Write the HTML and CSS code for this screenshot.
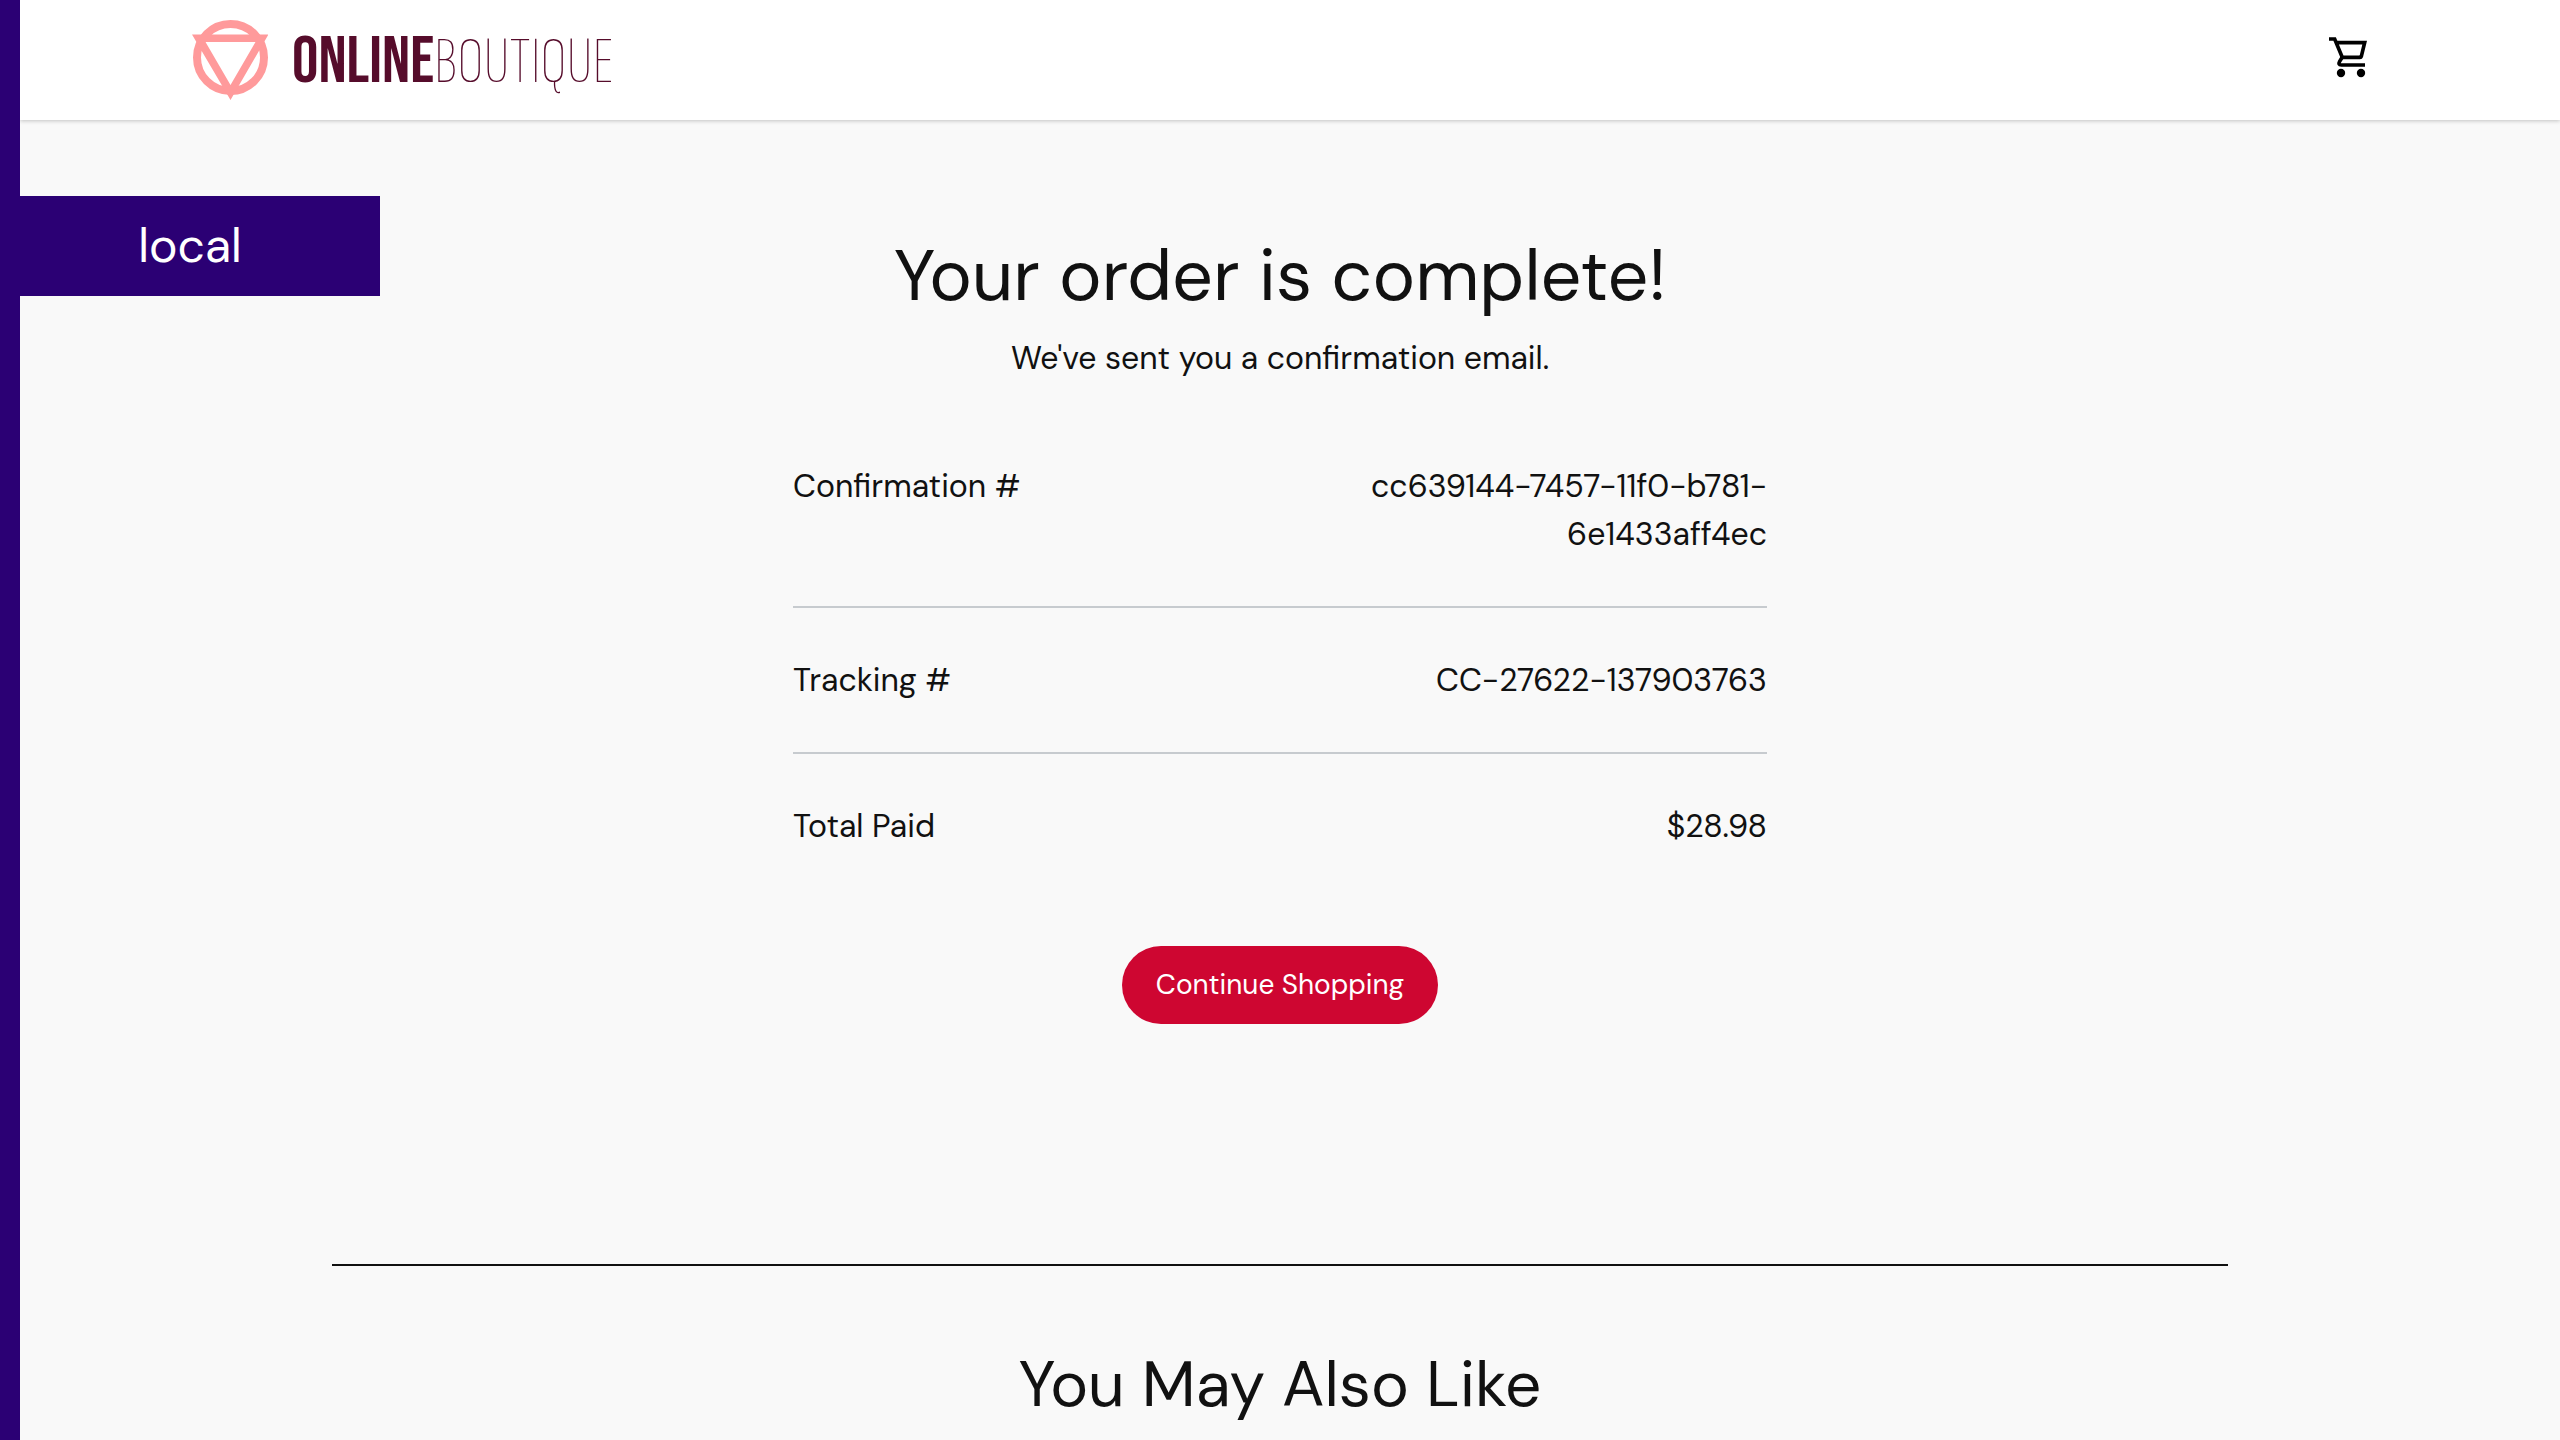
FILE: index.html
```html
<!DOCTYPE html>
<html lang="en">
<head>
  <meta charset="utf-8">
  <meta name="viewport" content="width=device-width, initial-scale=1">
  <title>Online Boutique</title>
  <link rel="stylesheet" href="styles.css">
</head>
<body>
  <div class="platform-flag">local</div>

  <header class="navbar">
    <a class="brand" href="#">
      <svg class="brand-mark" viewBox="0 0 76 82" aria-hidden="true">
        <circle cx="38.5" cy="38.5" r="33.5" fill="none" stroke="#ff9a9b" stroke-width="8"/>
        <path fill="#ff9a9b" fill-rule="evenodd" d="M0 15.500H76.500L38.500 81ZM13.500 23L38.500 66L63.500 23Z"/>
      </svg>
      <span class="brand-name"><span class="brand-bold">ONLINE</span><span class="brand-thin">BOUTIQUE</span></span>
    </a>
    <a class="cart-link" href="#" aria-label="Cart">
      <svg class="cart-icon" viewBox="0 0 120 126" aria-hidden="true">
        <g fill="none" stroke="#000" stroke-width="11">
          <path d="M3 9H20L43 64H96Q99 64 100 61L110 20H24"/>
          <path d="M43 63L35 76Q29 87 40 87H111"/>
        </g>
        <circle cx="39" cy="111" r="12.500"/>
        <circle cx="99" cy="111" r="12.500"/>
      </svg>
    </a>
  </header>

  <main>
    <section class="order">
      <h1>Your order is complete!</h1>
      <p class="order-note">We've sent you a confirmation email.</p>
      <dl class="order-details">
        <div class="order-row"><dt>Confirmation #</dt><dd>cc639144-7457-11f0-b781-6e1433aff4ec</dd></div>
        <div class="order-row"><dt>Tracking #</dt><dd>CC-27622-137903763</dd></div>
        <div class="order-row"><dt>Total Paid</dt><dd>$28.98</dd></div>
      </dl>
      <a class="button" href="#" role="button">Continue Shopping</a>
    </section>

    <section class="recommendations">
      <h2>You May Also Like</h2>
    </section>
  </main>
</body>
</html>
```
FILE: styles.css
```css
* {
  box-sizing: border-box;
}

body {
  margin: 0;
  min-height: 100vh;
  border-left: 20px solid #2b0074;
  background: #f9f9f9;
  color: #111;
  font-family: "DM Sans", Inter, sans-serif;
  font-size: 32px;
  line-height: 48px;
}

h1,
h2,
p,
dl,
dd {
  margin: 0;
}

h1,
h2 {
  font-weight: 400;
}

.platform-flag {
  position: absolute;
  top: 196px;
  left: 0;
  width: 380px;
  background: #2b0074;
  color: #fff;
  font-size: 48px;
  line-height: 100px;
  text-align: center;
}

.navbar {
  display: flex;
  align-items: center;
  justify-content: space-between;
  height: 120px;
  padding: 0 192px 0 172px;
  background: #fff;
  box-shadow: 0 1px 4px rgba(0, 0, 0, 0.22);
}

.brand {
  display: flex;
  align-items: center;
  gap: 24px;
  color: #560c2b;
  text-decoration: none;
}

.brand-mark {
  width: 76px;
  height: 82px;
}

.brand-name {
  display: flex;
  align-items: baseline;
  padding-top: 6px;
  line-height: 80px;
}

.brand-bold {
  font-family: "Bebas Neue", "Roboto Condensed", sans-serif;
  font-size: 66px;
}

.brand-thin {
  font-family: "Sofia Sans Extra Condensed", "Roboto Condensed", sans-serif;
  font-size: 66px;
  font-weight: 100;
}

.cart-link {
  display: flex;
  padding-bottom: 6px;
}

.cart-icon {
  width: 40px;
  height: 42px;
}

main {
  padding-right: 20px;
}

.order {
  display: flex;
  flex-direction: column;
  align-items: center;
  max-width: 974px;
  margin: 0 auto;
  padding: 114px 0 240px;
}

h1 {
  font-size: 72px;
  line-height: 84px;
}

.order-note {
  margin-top: 16px;
}

.order-details {
  align-self: stretch;
  margin: 32px 0 48px;
}

.order-row {
  display: flex;
  padding: 48px 0;
}

.order-row + .order-row {
  border-top: 2px solid #c7cbcf;
}

dt,
dd {
  flex: 1;
}

dd {
  padding-left: 30px;
  text-align: right;
}

.button {
  padding: 15px 34px;
  border-radius: 39px;
  background: #ce0631;
  color: #fff;
  font-size: 28px;
  text-decoration: none;
}

.recommendations {
  max-width: 1896px;
  margin: 0 auto;
  padding-top: 80px;
  border-top: 2px solid #111;
  text-align: center;
}

h2 {
  font-size: 64px;
  line-height: 77px;
}
```
